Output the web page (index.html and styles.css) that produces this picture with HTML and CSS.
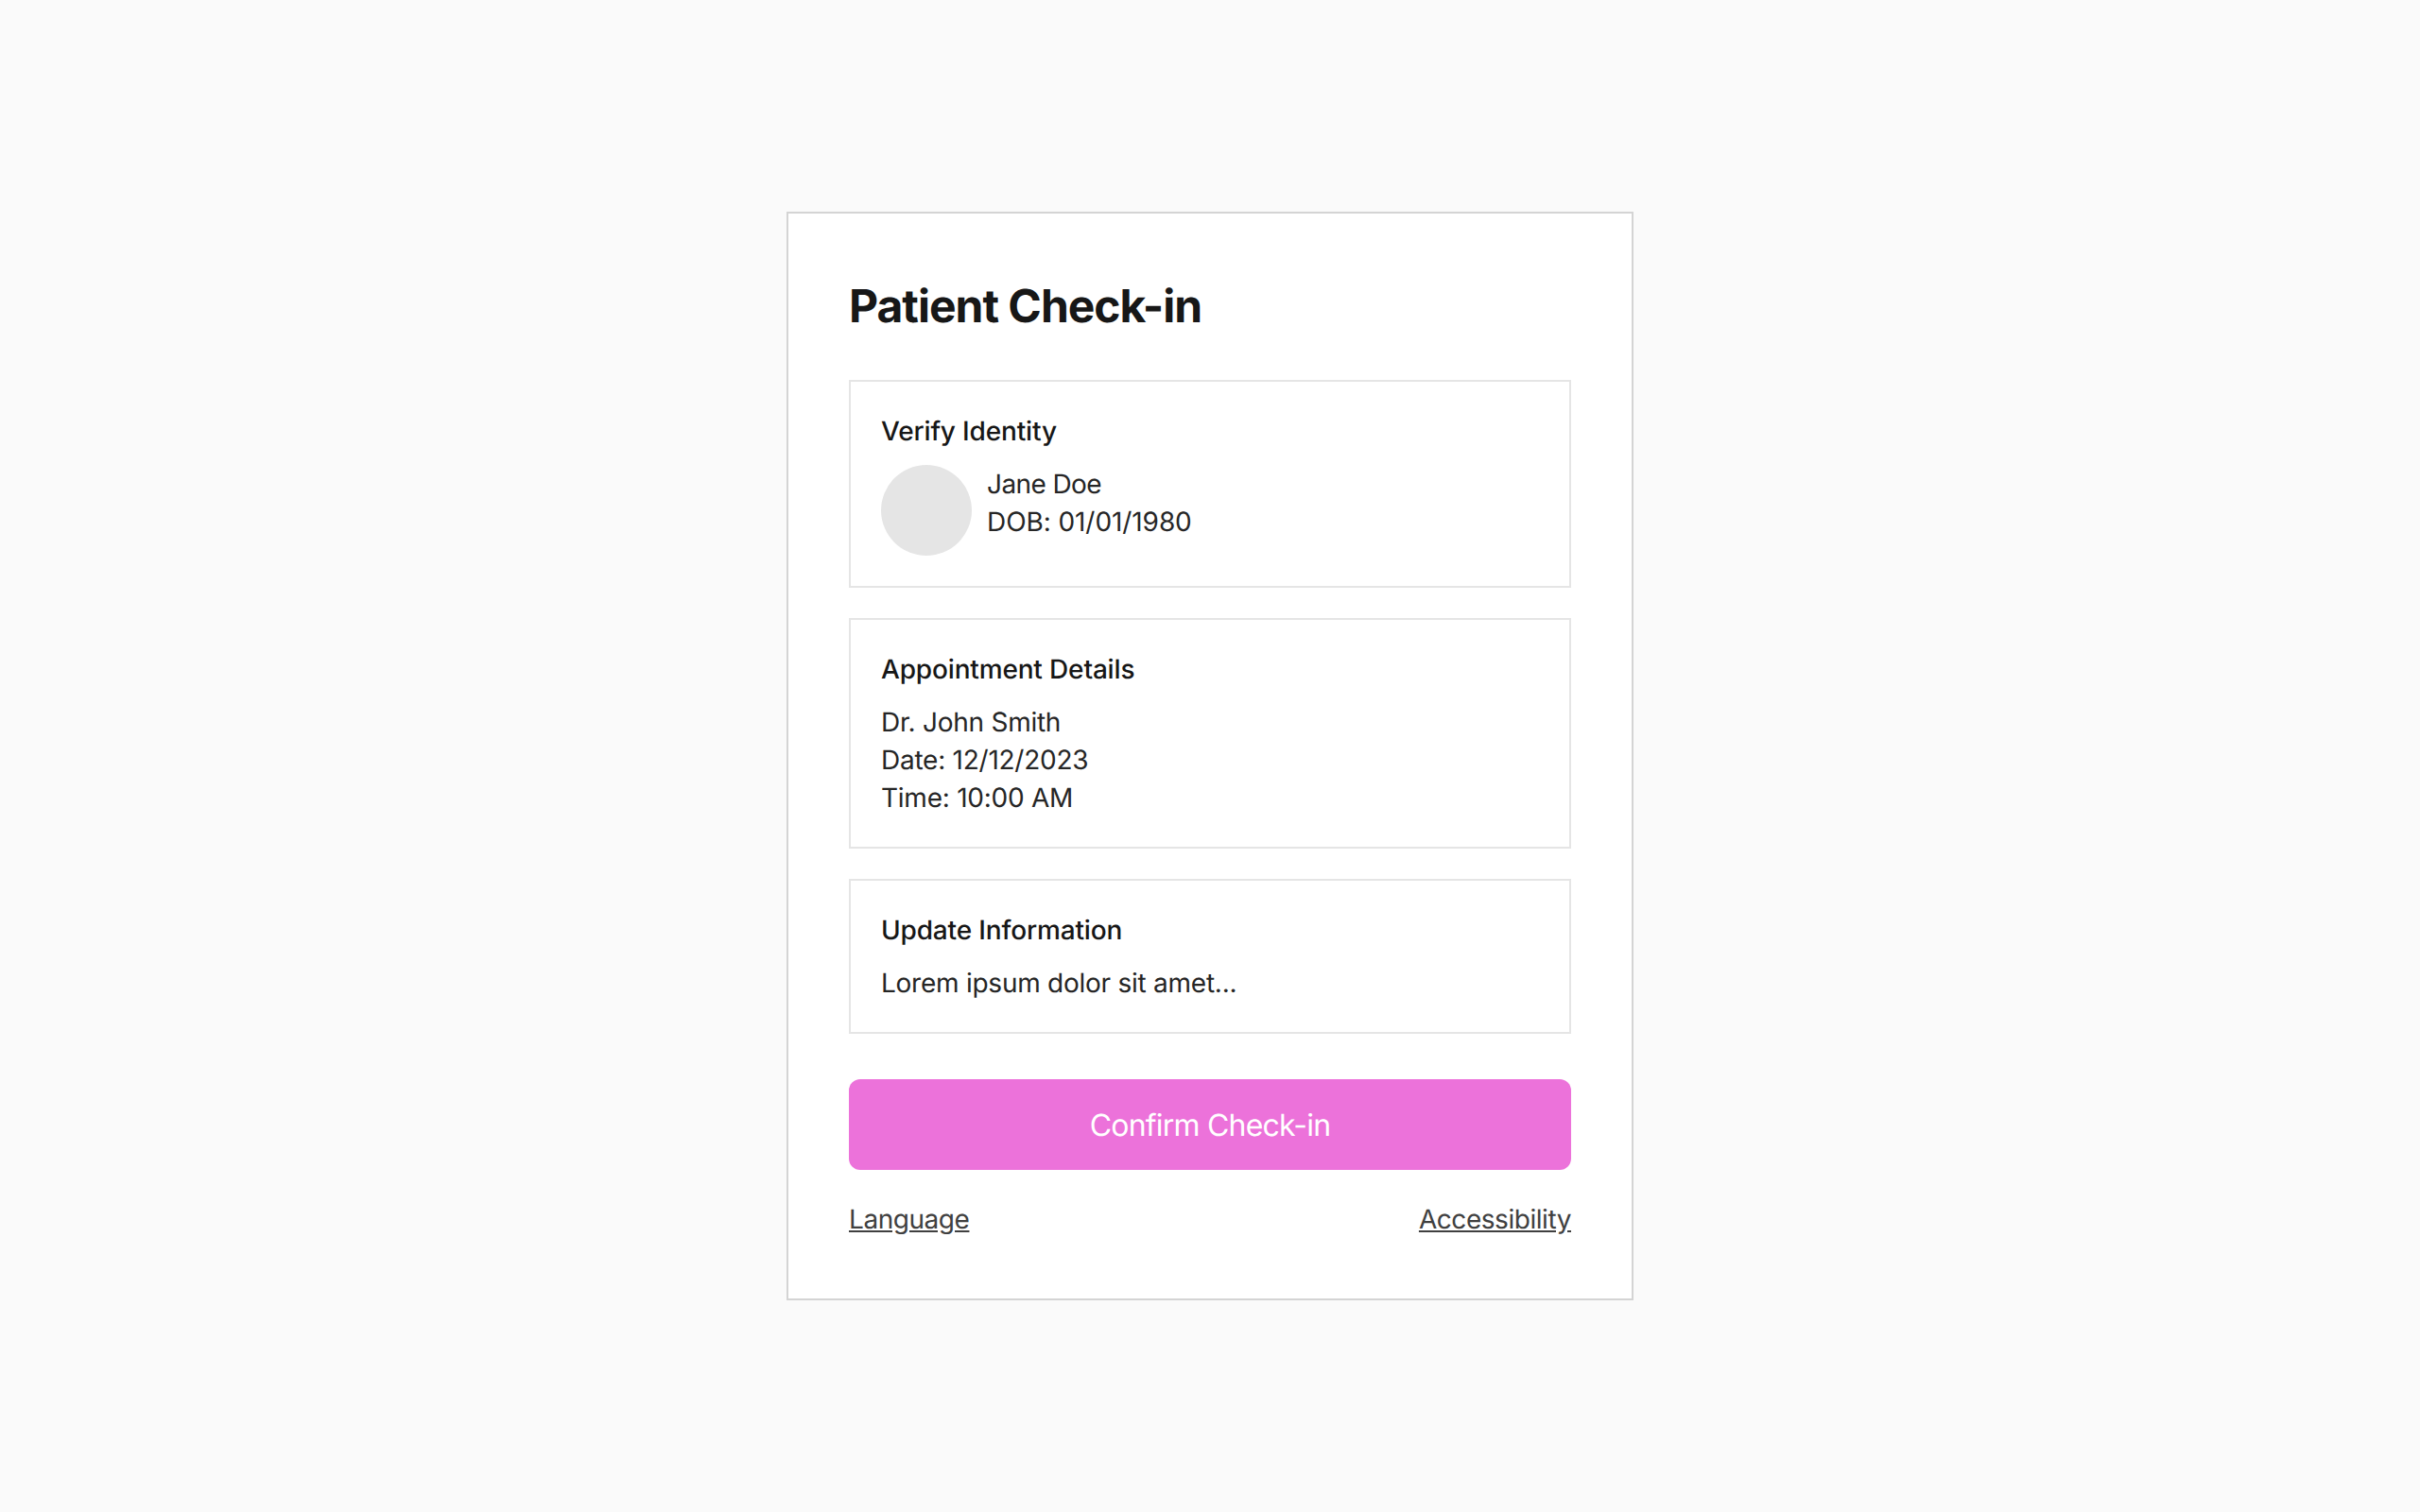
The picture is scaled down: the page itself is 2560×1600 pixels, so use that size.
FILE: index.html
```html
<!DOCTYPE html>
<html lang="en">
<head>
  <meta charset="UTF-8" />
  <meta name="viewport" content="width=device-width, initial-scale=1.0"/>
  <title>Patient Check-in</title>
  <link rel="stylesheet" href="styles.css">
</head>
<body>
  <div class="checkin-card">
    <h1 class="checkin-title">Patient Check-in</h1>

    <!-- Identity -->
    <section class="panel">
      <h2 class="panel-title">Verify Identity</h2>
      <div class="identity">
        <div class="avatar"></div>
        <div>
          <p class="patient-name">Jane Doe</p>
          <p class="patient-dob">DOB: 01/01/1980</p>
        </div>
      </div>
    </section>

    <!-- Appointment -->
    <section class="panel">
      <h2 class="panel-title">Appointment Details</h2>
      <p>Dr. John Smith</p>
      <p>Date: 12/12/2023</p>
      <p>Time: 10:00 AM</p>
    </section>

    <!-- Update -->
    <section class="panel">
      <h2 class="panel-title">Update Information</h2>
      <p>Lorem ipsum dolor sit amet...</p>
    </section>

    <button class="confirm-btn">Confirm Check-in</button>

    <div class="footer-links">
      <a href="#">Language</a>
      <a href="#">Accessibility</a>
    </div>
  </div>
</body>
</html>
```

FILE: styles.css
```css
body {
  margin: 0;
  height: 100vh;
  display: flex;
  justify-content: center;
  align-items: center;
  background: #fafafa;
  color: #171717;
  font-family: Inter, "Liberation Sans", sans-serif;
  font-size: 28px;
  line-height: 40px;
  letter-spacing: -0.25px;
  text-rendering: geometricPrecision;
}

p {
  margin: 0;
  color: #262626;
}

.checkin-card {
  width: 896px;
  box-sizing: border-box;
  padding: 64px;
  background: #fff;
  border: 2px solid #d4d4d4;
}

.checkin-title {
  margin: 0 0 44px;
  font-size: 48px;
  line-height: 68px;
  font-weight: 700;
  letter-spacing: -1px;
}

/* Panels */
.panel {
  padding: 32px;
  margin-bottom: 32px;
  border: 2px solid #e5e5e5;
}
.panel-title {
  margin: 0 0 16px;
  font-size: 28px;
  line-height: 40px;
  font-weight: 500;
  letter-spacing: -0.16px;
}
.identity {
  display: flex;
  gap: 16px;
}
.avatar {
  width: 96px;
  height: 96px;
  border-radius: 50%;
  background: #e5e5e5;
}
.patient-name {
  letter-spacing: -0.6px;
}
.patient-dob {
  letter-spacing: -0.08px;
}

/* Button & links */
.confirm-btn {
  display: block;
  width: 100%;
  height: 96px;
  margin-top: 48px;
  border: none;
  border-radius: 12px;
  background: #ec72da;
  color: #fff;
  font-family: inherit;
  font-size: 32px;
  letter-spacing: -0.8px;
  text-rendering: inherit;
}
.footer-links {
  display: flex;
  justify-content: space-between;
  margin-top: 32px;
  letter-spacing: -0.45px;
}
.footer-links a {
  color: #404040;
}
```
